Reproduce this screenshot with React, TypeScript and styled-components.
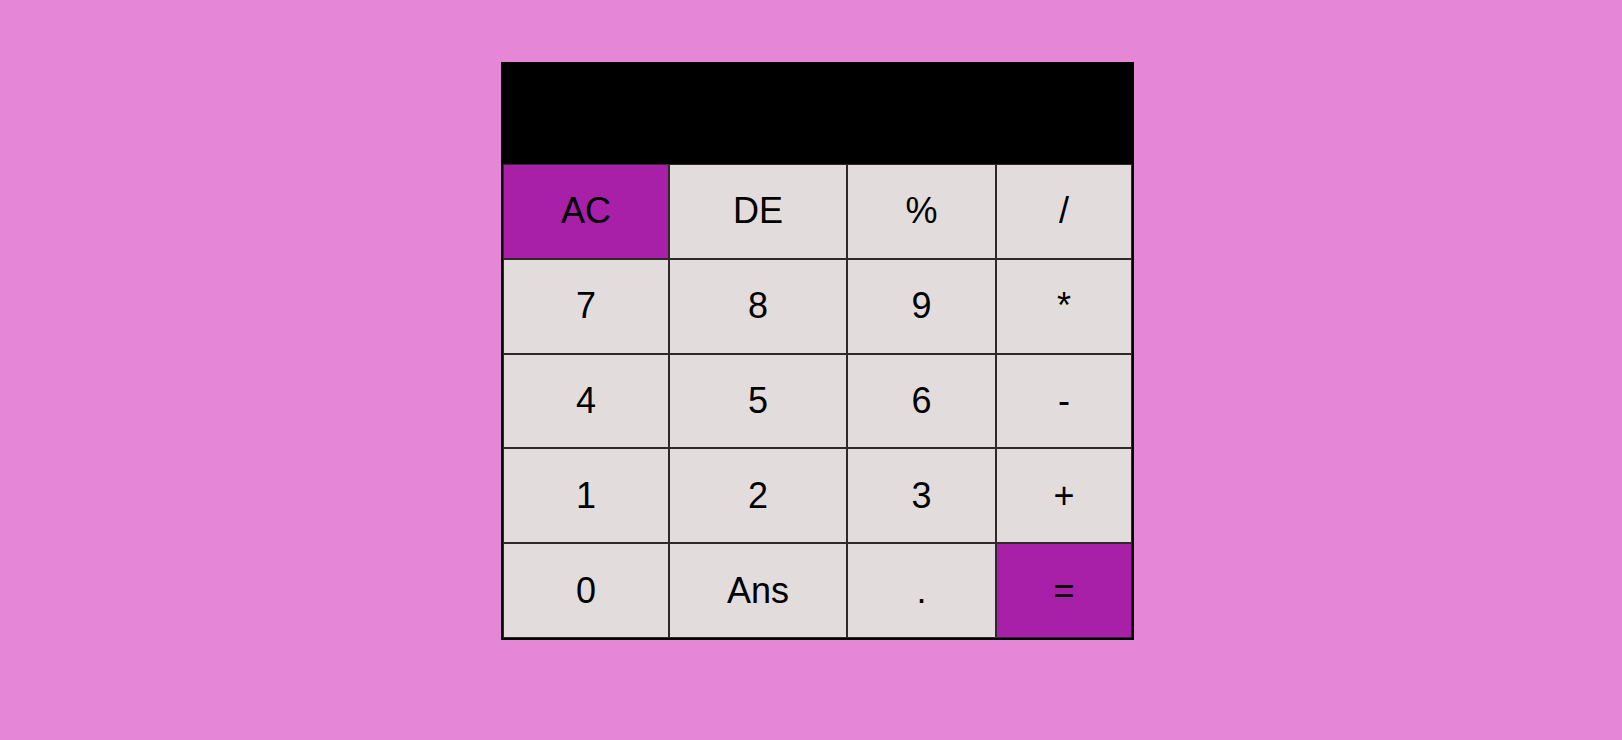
import React from "react";
import styled, { createGlobalStyle } from "styled-components";

const Global = createGlobalStyle`
  html, body { margin: 0; padding: 0; background: #e586d6; }
  body { font-family: "Liberation Sans", Arial, sans-serif; }
`;

const Page = styled.div`
  min-height: 740px;
  padding: 62px 0 0 501px;
  box-sizing: border-box;
`;

const Calculator = styled.div`
  width: 633px;
  border: 2px solid #000;
  box-sizing: border-box;
  background: #000;
`;

const Display = styled.div`
  height: 100px;
  background: #000;
`;

const Keys = styled.div`
  display: grid;
  grid-template-columns: 166px 178px 149px 136px;
  grid-auto-rows: 94.8px;
`;

const Key = styled.button<{ $accent?: boolean }>`
  margin: 0;
  padding: 0;
  border: 1px solid #2e2a2a;
  background: ${(p) => (p.$accent ? "#a81fa8" : "#e2dddc")};
  color: #000;
  font-family: "Liberation Sans", Arial, sans-serif;
  font-size: 36px;
  display: flex;
  align-items: center;
  justify-content: center;
  cursor: pointer;
`;

const keys: { label: string; accent?: boolean }[] = [
  { label: "AC", accent: true },
  { label: "DE" },
  { label: "%" },
  { label: "/" },
  { label: "7" },
  { label: "8" },
  { label: "9" },
  { label: "*" },
  { label: "4" },
  { label: "5" },
  { label: "6" },
  { label: "-" },
  { label: "1" },
  { label: "2" },
  { label: "3" },
  { label: "+" },
  { label: "0" },
  { label: "Ans" },
  { label: "." },
  { label: "=", accent: true },
];

export default function App() {
  return (
    <>
      <Global />
      <Page>
        <Calculator>
          <Display />
          <Keys>
            {keys.map((k) => (
              <Key key={k.label} $accent={k.accent}>
                {k.label}
              </Key>
            ))}
          </Keys>
        </Calculator>
      </Page>
    </>
  );
}
